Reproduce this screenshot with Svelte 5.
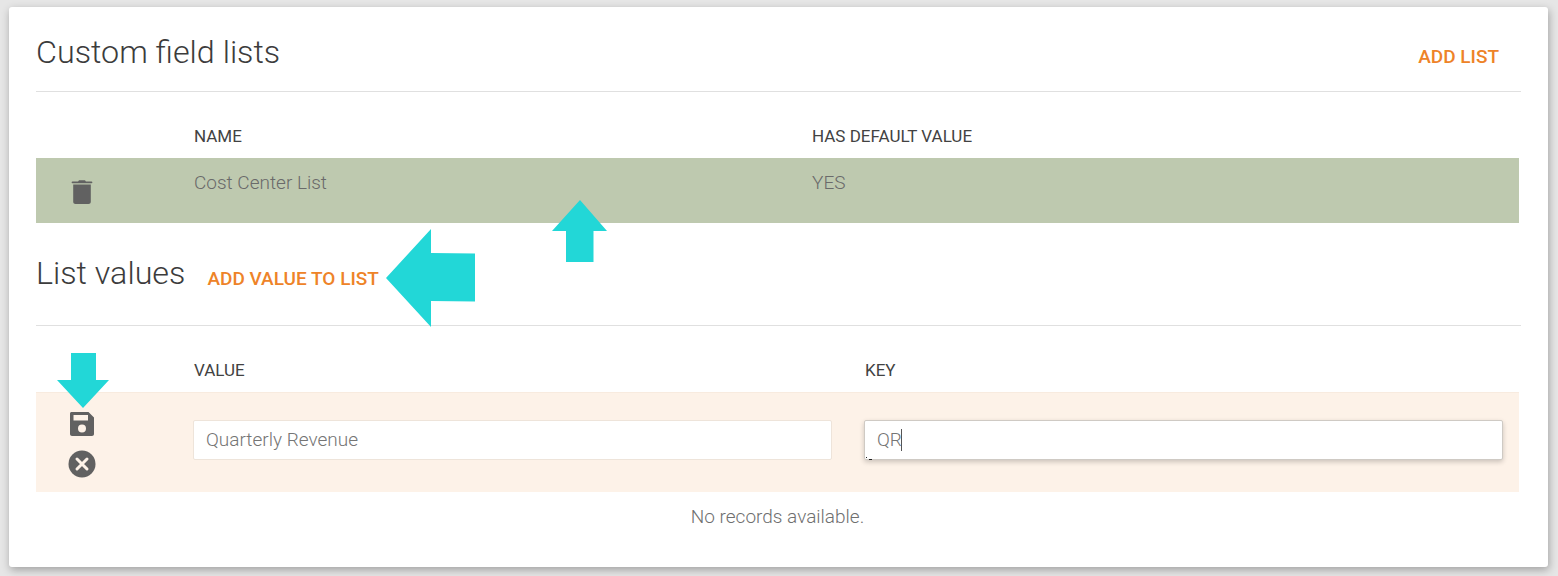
<script>
  const lists = [{ name: 'Cost Center List', hasDefault: 'YES' }];
  let value = 'Quarterly Revenue';
  let key = 'QR';
</script>

<div class="page">
  <section class="card">
    <header class="top">
      <h2>Custom field lists</h2>
      <button class="link add-list">ADD LIST</button>
    </header>

    <div class="grid-head lists-cols">
      <span></span>
      <span>NAME</span>
      <span>HAS DEFAULT VALUE</span>
    </div>
    {#each lists as list}
      <div class="list-row lists-cols">
        <span class="icon-cell">
          <svg width="24" height="28" viewBox="0 0 24 28" fill="#616161">
            <path d="M2.5 5.2h19c.5 0 .9-.3.9-.8s-.4-.8-.9-.8h-5.600L15 2.300h-6L8.100 3.600H2.500c-.5 0-.9.300-.9.800s.4.800.9.800z" />
            <path d="M3.200 6.500h17.600v17.300c0 1.300-1 2.300-2.300 2.300h-13c-1.300 0-2.300-1-2.300-2.300z" />
          </svg>
        </span>
        <span>{list.name}</span>
        <span>{list.hasDefault}</span>
      </div>
    {/each}

    <header class="sub">
      <h2>List values</h2>
      <button class="link add-value">ADD VALUE TO LIST</button>
    </header>

    <div class="grid-head values-cols">
      <span></span>
      <span>VALUE</span>
      <span>KEY</span>
    </div>
    <div class="edit-row values-cols">
      <span class="actions">
        <svg width="26" height="26" viewBox="0 0 26 26" fill="#616161">
          <path fill-rule="evenodd" d="M2.500 1h17L25 6.500V23c0 1.100-.9 2-2 2H3c-1.100 0-2-.9-2-2V2.500C1 1.700 1.700 1 2.500 1zM4.500 4v5.500h14.500V4zM13 13.500a4 4 0 1 0 0 8 4 4 0 0 0 0-8z" />
        </svg>
        <svg width="28" height="28" viewBox="0 0 28 28">
          <circle cx="14" cy="14" r="13.500" fill="#616161" />
          <path d="M9 9l10 10M19 9L9 19" stroke="#fdf2e8" stroke-width="3" stroke-linecap="round" />
        </svg>
      </span>
      <input class="field" bind:value />
      <span class="key-wrap">
        <input class="field focused" bind:value={key} />
        <i class="caret"></i>
        <i class="speck dot"></i>
        <i class="speck dash"></i>
      </span>
    </div>
    <p class="empty">No records available.</p>

    <svg class="arrow up" width="56" height="63" viewBox="0 0 56 63"><path d="M28 0L55 31H41.500V62H14V31H0z" /></svg>
    <svg class="arrow left" width="90" height="98" viewBox="0 0 90 98"><path d="M45 0V24L89 24.500V72.500L45 72V98L0 49z" /></svg>
    <svg class="arrow down" width="52" height="55" viewBox="0 0 52 55"><path d="M14 0H39V27H52L26 55L0 27H14z" /></svg>
  </section>
</div>

<style>
  :global(body) {
    margin: 0;
    background: #e6e6e6;
    font-family: Roboto, "Liberation Sans", sans-serif;
  }

  .page {
    height: 576px;
    padding: 7px 10px 9px 9px;
    box-sizing: border-box;
    overflow: hidden;
  }

  .card {
    position: relative;
    height: 560px;
    box-sizing: border-box;
    padding: 0 27px;
    background: #fff;
    border-radius: 3px;
    box-shadow: 1px 3px 8px rgba(0, 0, 0, 0.3);
    color: #424242;
  }

  h2 {
    margin: 0;
    font-size: 32.25px;
    font-weight: 300;
    line-height: 36px;
    color: #3c3c3c;
  }

  .link {
    padding: 0;
    border: 0;
    background: none;
    color: #ee8328;
    font: 500 19px/22px Roboto, "Liberation Sans", sans-serif;
  }

  .top {
    display: flex;
    justify-content: space-between;
    height: 85px;
    padding-top: 27px;
    box-sizing: border-box;
    border-bottom: 1px solid #e0e0e0;
  }

  .add-list {
    margin: 12px 22px 0 0;
    height: 22px;
  }

  .grid-head {
    height: 66px;
    align-items: center;
    padding-top: 22px;
    box-sizing: border-box;
    font-size: 17px;
    color: #424242;
  }

  .grid-head > span {
    line-height: 20px;
  }

  .grid-head > span,
  .list-row > span {
    padding-left: 1px;
  }

  .lists-cols,
  .values-cols {
    display: grid;
    width: 1483px;
  }

  .lists-cols {
    grid-template-columns: 157px 618px 1fr;
  }

  .values-cols {
    grid-template-columns: 157px 671px 1fr;
  }

  .list-row {
    height: 65px;
    background: #bec9af;
    color: #6a6a6a;
    font-size: 19px;
    font-weight: 300;
    line-height: 50px;
  }

  .list-row > .icon-cell {
    display: flex;
    justify-content: center;
    align-items: center;
    width: 92px;
    padding: 2px 0 0;
  }

  .sub {
    display: flex;
    align-items: flex-start;
    gap: 22px;
    height: 103px;
    padding-top: 32px;
    box-sizing: border-box;
    border-bottom: 1px solid #e0e0e0;
  }

  .add-value {
    margin-top: 13px;
  }

  .edit-row {
    height: 100px;
    align-items: start;
    background: #fdf2e8;
    border-top: 1px solid #f8ebdf;
    box-sizing: border-box;
  }

  .actions {
    display: flex;
    flex-direction: column;
    align-items: center;
    gap: 13px;
    width: 92px;
    margin-top: 18px;
  }

  .field {
    box-sizing: border-box;
    height: 40px;
    padding: 0 12px 2px;
    border: 1px solid #eee4da;
    border-radius: 2px;
    background: #fff;
    color: #757575;
    font: 300 19px Roboto, "Liberation Sans", sans-serif;
    outline: none;
  }

  .values-cols > .field {
    width: 639px;
    margin-top: 27px;
  }

  .key-wrap {
    position: relative;
    display: block;
    width: 639px;
    height: 40px;
    margin-top: 27px;
  }

  .focused {
    width: 100%;
    border-color: #cfcac4;
    box-shadow: 0 2px 5px rgba(0, 0, 0, 0.2);
  }

  .caret {
    position: absolute;
    left: 37px;
    top: 9px;
    width: 1px;
    height: 22px;
    background: #555;
  }

  .speck {
    position: absolute;
    height: 1px;
    background: #222;
  }

  .dot {
    left: 2px;
    top: 37px;
    width: 1px;
  }

  .dash {
    left: 5px;
    top: 39px;
    width: 3px;
  }

  .empty {
    margin: 0;
    padding-top: 14px;
    width: 1483px;
    text-align: center;
    font-size: 19px;
    font-weight: 300;
    line-height: 22px;
    color: #6f6f6f;
  }

  .arrow {
    position: absolute;
    fill: #22d7d7;
  }

  .up {
    left: 543px;
    top: 193px;
  }

  .left {
    left: 377px;
    top: 222px;
  }

  .down {
    left: 48px;
    top: 346px;
  }
</style>
